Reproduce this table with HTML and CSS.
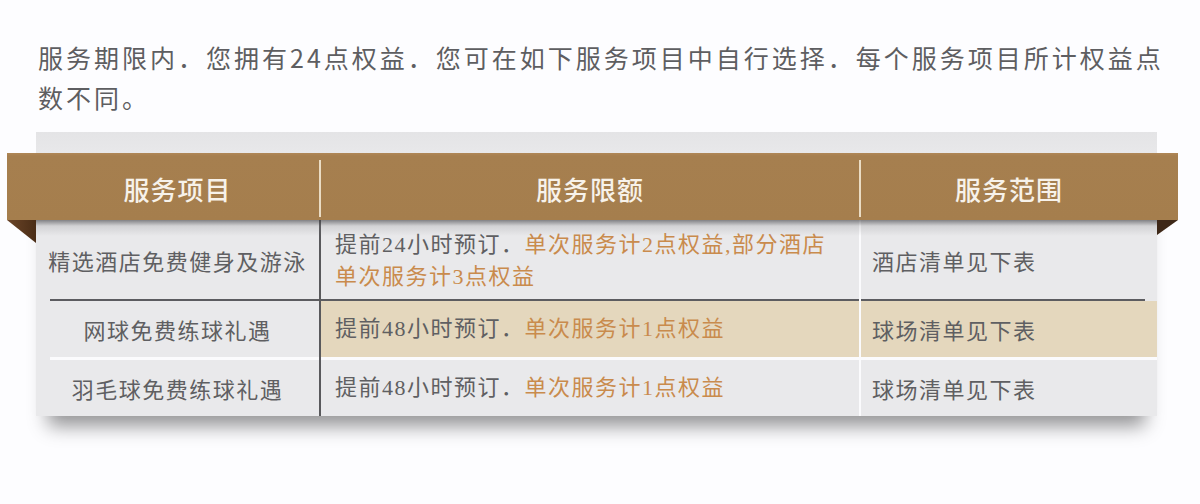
FILE: index.html
```html
<!DOCTYPE html>
<html lang="zh-CN">
<head>
<meta charset="utf-8">
<title>服务项目</title>
<link rel="stylesheet" href="styles.css">
</head>
<body>
<p class="intro">服务期限内．您拥有24点权益．您可在如下服务项目中自行选择．每个服务项目所计权益点数不同。</p>

<div class="panel">
  <div class="band">
    <div class="hcell">服务项目</div>
    <div class="hcell">服务限额</div>
    <div class="hcell last">服务范围</div>
  </div>
  <div class="tbody">
    <div class="row row-1">
      <div class="c1">精选酒店免费健身及游泳</div>
      <div class="c2">
        <div class="lines">
          <div>提前24小时预订．<em>单次服务计2点权益,部分酒店</em></div>
          <div><em>单次服务计3点权益</em></div>
        </div>
      </div>
      <div class="c3">酒店清单见下表</div>
    </div>
    <div class="sep sep-dark">
      <div class="c1"><i></i></div>
      <div class="c2"><i></i></div>
      <div class="c3"><i></i></div>
    </div>
    <div class="row row-2 hl">
      <div class="c1">网球免费练球礼遇</div>
      <div class="c2"><span>提前48小时预订．<em>单次服务计1点权益</em></span></div>
      <div class="c3">球场清单见下表</div>
    </div>
    <div class="sep sep-light">
      <div class="c1"><i></i></div>
      <div class="c2"><i></i></div>
      <div class="c3"><i></i></div>
    </div>
    <div class="row row-3">
      <div class="c1">羽毛球免费练球礼遇</div>
      <div class="c2"><span>提前48小时预订．<em>单次服务计1点权益</em></span></div>
      <div class="c3">球场清单见下表</div>
    </div>
  </div>
</div>
</body>
</html>
```

FILE: styles.css
```css
html, body {
  margin: 0;
  padding: 0;
  background: #fdfdff;
}

body {
  width: 1200px;
  height: 504px;
  overflow: hidden;
  font-family: "Noto Sans CJK SC", "Noto Sans", sans-serif;
}

.intro {
  margin: 0;
  padding: 37px 0 0 38px;
  width: 1132px;
  font-size: 25px;
  letter-spacing: 3px;
  line-height: 40px;
  color: #5e5e61;
}

.panel {
  margin: 15px 43px 0 36px;
  padding-top: 21px;
  background: linear-gradient(#e4e4e6, #e8e8ea 21px, #e9e9eb 21px);
  box-shadow: 0 22px 18px -12px rgba(0, 0, 0, 0.42);
}

.band {
  position: relative;
  margin: 0 -21px 0 -29px;
  padding: 7px 21px 3px 29px;
  height: 57px;
  display: grid;
  grid-template-columns: 285px 540px 296px;
  background: linear-gradient(#b08757 0, #a67f4f 3px, #a57e4d 100%);
}

.band::before {
  content: "";
  position: absolute;
  top: 100%;
  left: 0;
  width: 29px;
  height: 23px;
  background: linear-gradient(90deg, #6b4528, #4a2d16);
  clip-path: polygon(0 0, 100% 0, 100% 100%);
}

.band::after {
  content: "";
  position: absolute;
  top: 100%;
  right: 0;
  width: 21px;
  height: 15px;
  background: #3e2818;
  clip-path: polygon(0 0, 100% 0, 0 100%);
}

.hcell {
  display: flex;
  align-items: center;
  justify-content: center;
  border-right: 2px solid #eadcc4;
  color: #f7f2ea;
  font-size: 26px;
  font-weight: 500;
  letter-spacing: 1px;
}

.hcell.last {
  border-right: 0;
}

.tbody {
  position: relative;
}

.tbody::before {
  content: "";
  position: absolute;
  left: 0;
  right: 0;
  top: 0;
  height: 16px;
  background: linear-gradient(rgba(60, 60, 64, 0.6), rgba(120, 120, 124, 0.2) 6px, rgba(233, 233, 235, 0));
  pointer-events: none;
}

.row,
.sep {
  display: grid;
  grid-template-columns: 285px 540px 296px;
}

.row {
  height: 56px;
  font-size: 22px;
  letter-spacing: 1.5px;
  color: #5f5f62;
}

.row-1 {
  height: 79px;
}

.row > div {
  display: flex;
  align-items: center;
}

.c1 {
  box-sizing: border-box;
  border-right: 2px solid #59595c;
}

.c2 {
  box-sizing: border-box;
  border-right: 2px solid #fbfbfd;
}

.row .c1 {
  justify-content: center;
}

.row .c2 {
  padding: 0 26px 0 14px;
  line-height: 32px;
  font-family: "Liberation Serif", "Noto Sans CJK SC", serif;
}

.row-1 .c2 {
  padding-top: 2px;
}

.row .c3 {
  padding-left: 11px;
}

.row em {
  font-style: normal;
  color: #c98b4d;
}

.hl .c2,
.hl .c3 {
  background: #e4d7bd;
}

.sep > div {
  display: flex;
}

.sep i {
  display: block;
  flex: 1;
}

.sep-dark {
  height: 2px;
}

.sep-dark i {
  background: #5c5c60;
}

.sep-dark .c1 i {
  margin-left: 14px;
}

.sep-dark .c3 i {
  margin-right: 12px;
}

.sep-light {
  height: 3px;
}

.sep-light i {
  background: #fbfbfd;
}

.sep-light .c1 i {
  margin-left: 14px;
}
```
